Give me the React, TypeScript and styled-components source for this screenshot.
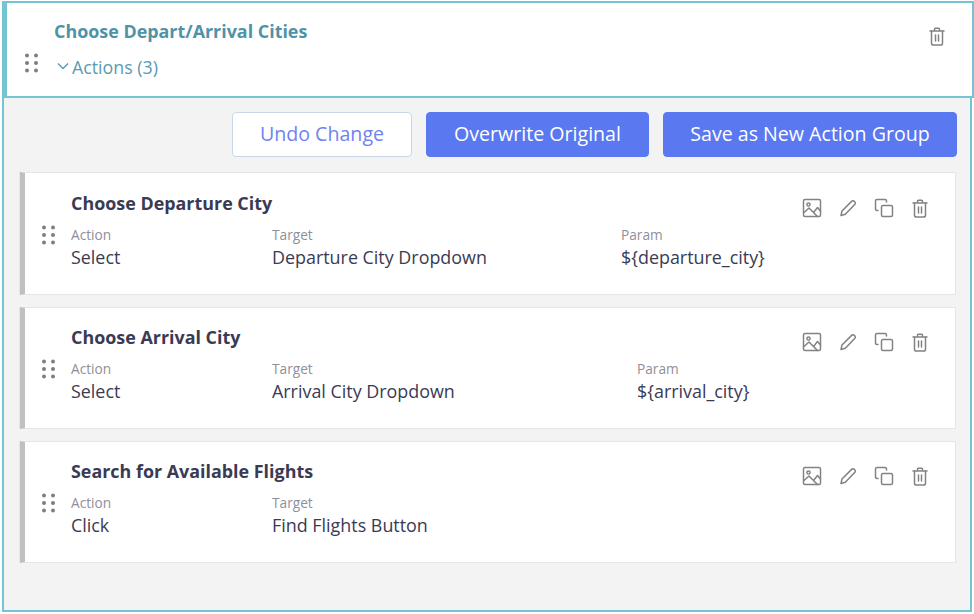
import React from "react";
import styled, { createGlobalStyle } from "styled-components";

const Global = createGlobalStyle`
  html, body { margin: 0; padding: 0; background: #fff; }
  body { font-family: "Open Sans", "Liberation Sans", sans-serif; }
  * { box-sizing: border-box; }
`;

const Frame = styled.div`
  width: 974px;
  height: 614px;
  padding: 1px 0 2px 2px;
  display: flex;
  flex-direction: column;
`;

const Header = styled.header`
  height: 97px;
  background: #fff;
  border: 2px solid #74c5d4;
  border-left-width: 5px;
  padding: 16px 24px 0 17px;
  display: flex;
  flex-direction: column;
  flex: none;
`;

const HeaderTop = styled.div`
  display: flex;
  justify-content: space-between;
  align-items: flex-start;
  padding-left: 30px;
`;

const GroupTitle = styled.div`
  font-size: 17.9px;
  line-height: 24px;
  font-weight: 700;
  color: #4f93a8;
`;

const HeaderBottom = styled.div`
  display: flex;
  align-items: center;
  margin-top: 5px;
`;

const ActionsToggle = styled.div`
  display: flex;
  align-items: center;
  gap: 2px;
  margin-left: 16px;
  font-size: 17.8px;
  line-height: 24px;
  color: #5a9bb0;
`;

const Body = styled.section`
  flex: 1;
  margin-right: 2px;
  background: #f3f3f3;
  border: 2px solid #74c5d4;
  border-top: 0;
  padding: 14px 13px 0 16px;
`;

const Toolbar = styled.div`
  display: flex;
  justify-content: flex-end;
  gap: 14px;
  margin-bottom: 15px;
`;

const Button = styled.button<{ $primary?: boolean; $width: number }>`
  width: ${(p) => p.$width}px;
  height: 45px;
  border-radius: 4px;
  border: 1px solid ${(p) => (p.$primary ? "#5a78f0" : "#c8d8e8")};
  background: ${(p) => (p.$primary ? "#5a78f0" : "#fff")};
  color: ${(p) => (p.$primary ? "#fff" : "#6f83f2")};
  font-family: inherit;
  font-size: 19.6px;
  padding: 0 0 2px;
`;

const Cards = styled.div`
  display: flex;
  flex-direction: column;
  gap: 12px;
  margin-right: 1px;
`;

const Card = styled.article<{ $height: number; $top: number }>`
  height: ${(p) => p.$height}px;
  background: #fff;
  border: 1px solid #e6e6e6;
  border-left: 5px solid #c0c0c0;
  box-shadow: -1px 0 0 #e6e6e6;
  padding: ${(p) => p.$top}px 24px 0 16px;
`;

const CardHead = styled.div`
  display: flex;
  justify-content: space-between;
  align-items: flex-start;
  padding-left: 30px;
`;

const CardTitle = styled.h3`
  margin: 0;
  font-size: 17.9px;
  line-height: 24px;
  font-weight: 700;
  color: #3a3a55;
`;

const IconRow = styled.div`
  display: flex;
  gap: 14px;
  margin-top: 6px;
`;

const IconSlot = styled.svg`
  width: 22px;
  height: 22px;
  fill: none;
  stroke: #828285;
  stroke-width: 1.5;
  stroke-linecap: round;
  stroke-linejoin: round;
  display: block;
`;

const HeadTrash = styled(IconSlot)`
  margin-top: 6px;
`;

const CardBody = styled.div`
  display: flex;
  align-items: flex-start;
  margin-top: 6px;
`;

const Grip = styled.svg`
  width: 16px;
  height: 22px;
  fill: #7f7f7f;
  flex: none;
  display: block;
  margin-bottom: 8px;
`;

const GripInCard = styled(Grip)`
  margin-top: -1px;
  margin-right: 14px;
  margin-bottom: 0;
`;

const Field = styled.div<{ $width: number }>`
  width: ${(p) => p.$width}px;
  flex: none;
  margin-top: 1px;
`;

const FieldLabel = styled.div`
  font-size: 13.7px;
  line-height: 17px;
  color: #8f8f98;
`;

const FieldValue = styled.div`
  font-size: 17.9px;
  line-height: 29px;
  color: #3a3a55;
`;

const GripIcon = ({ as: C = Grip }: { as?: typeof Grip }) => (
  <C viewBox="0 0 16 22">
    {[3.5, 11, 18.5].flatMap((y) =>
      [3, 12].map((x) => <circle key={`${x}-${y}`} cx={x} cy={y} r="2" />)
    )}
  </C>
);

const Chevron = () => (
  <svg width="14" height="10" viewBox="0 0 14 10" fill="none" stroke="#5a9bb0" strokeWidth="1.4">
    <path d="M2 1.500 7 6.500 12 1.500" />
  </svg>
);

const TrashPaths = () => (
  <>
    <path d="M4 6h14M8.500 6V4.200c0-.5.4-.9.9-.9h3.200c.5 0 .9.4.9.9V6" />
    <path d="M5.500 6v12.200c0 1 .8 1.800 1.800 1.800h7.400c1 0 1.800-.8 1.800-1.800V6" />
    <path d="M9.500 10v6M12.500 10v6" />
  </>
);

const ImageIcon = () => (
  <IconSlot viewBox="0 0 22 22">
    <rect x="2.500" y="2.500" width="17" height="17" rx="1.500" />
    <circle cx="7.500" cy="7.500" r="1.600" />
    <path d="M3 15.500 8 11l8.500 8.500M12.500 15.500l4-5 3 3.500" />
  </IconSlot>
);

const PencilIcon = () => (
  <IconSlot viewBox="0 0 22 22">
    <path d="M4 18.500 5 14 14.600 4.400c.8-.8 2-.8 2.700 0l.4.4c.8.800.8 2 0 2.700L8.300 17.300Z" />
  </IconSlot>
);

const CopyIcon = () => (
  <IconSlot viewBox="0 0 22 22">
    <rect x="8.500" y="8.500" width="11" height="11" rx="1.500" />
    <path d="M13.500 5V4c0-.9-.7-1.500-1.500-1.500H4c-.9 0-1.500.7-1.500 1.500v8c0 .8.600 1.500 1.500 1.500h1" />
  </IconSlot>
);

const TrashIcon = () => (
  <IconSlot viewBox="0 0 22 22">
    <TrashPaths />
  </IconSlot>
);

type FieldData = { label: string; value: string; width: number };
type CardData = { title: string; height: number; top: number; fields: FieldData[] };

const cards: CardData[] = [
  {
    title: "Choose Departure City",
    height: 123,
    top: 18,
    fields: [
      { label: "Action", value: "Select", width: 201 },
      { label: "Target", value: "Departure City Dropdown", width: 349 },
      { label: "Param", value: "${departure_city}", width: 200 },
    ],
  },
  {
    title: "Choose Arrival City",
    height: 122,
    top: 17,
    fields: [
      { label: "Action", value: "Select", width: 201 },
      { label: "Target", value: "Arrival City Dropdown", width: 365 },
      { label: "Param", value: "${arrival_city}", width: 200 },
    ],
  },
  {
    title: "Search for Available Flights",
    height: 122,
    top: 17,
    fields: [
      { label: "Action", value: "Click", width: 201 },
      { label: "Target", value: "Find Flights Button", width: 349 },
    ],
  },
];

export default function App() {
  return (
    <>
      <Global />
      <Frame>
        <Header>
          <HeaderTop>
            <GroupTitle>Choose Depart/Arrival Cities</GroupTitle>
            <HeadTrash viewBox="0 0 22 22">
              <TrashPaths />
            </HeadTrash>
          </HeaderTop>
          <HeaderBottom>
            <GripIcon />
            <ActionsToggle>
              <Chevron />
              Actions (3)
            </ActionsToggle>
          </HeaderBottom>
        </Header>
        <Body>
          <Toolbar>
            <Button $width={180}>Undo Change</Button>
            <Button $primary $width={223}>Overwrite Original</Button>
            <Button $primary $width={294}>Save as New Action Group</Button>
          </Toolbar>
          <Cards>
            {cards.map((c) => (
              <Card key={c.title} $height={c.height} $top={c.top}>
                <CardHead>
                  <CardTitle>{c.title}</CardTitle>
                  <IconRow>
                    <ImageIcon />
                    <PencilIcon />
                    <CopyIcon />
                    <TrashIcon />
                  </IconRow>
                </CardHead>
                <CardBody>
                  <GripIcon as={GripInCard} />
                  {c.fields.map((f) => (
                    <Field key={f.label} $width={f.width}>
                      <FieldLabel>{f.label}</FieldLabel>
                      <FieldValue>{f.value}</FieldValue>
                    </Field>
                  ))}
                </CardBody>
              </Card>
            ))}
          </Cards>
        </Body>
      </Frame>
    </>
  );
}
